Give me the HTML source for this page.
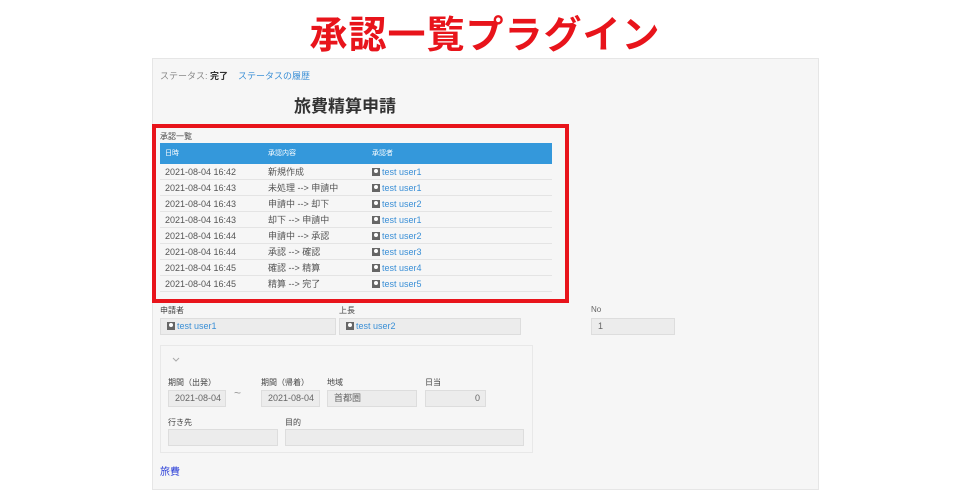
<!DOCTYPE html>
<html><head><meta charset="utf-8"><style>
body{margin:0;width:970px;height:485px;background:#fff;position:relative;overflow:hidden;font-family:"Liberation Sans","Noto Sans CJK JP",sans-serif;}
.a{position:absolute}
.t{font-size:9px;color:#444;white-space:nowrap}
.in{position:absolute;background:#ececec;border:1px solid #ddd;box-sizing:border-box;font-size:9px;color:#666;line-height:14px;padding-left:6px}
.u{color:#3a8fd6}
.ic{display:inline-block;width:8px;height:8px;background:#666;vertical-align:-1px;margin-right:2px;position:relative}
.ic:after{content:"";position:absolute;left:2px;top:1px;width:4px;height:4px;border-radius:50%;background:#fff}
.row{position:absolute;left:160px;width:392px;height:16px;border-bottom:1px solid #e4e4e4;box-sizing:border-box;font-size:9px;color:#555;line-height:16px}
.row span{position:absolute;top:0}
</style></head><body>
<div class="a" style="left:0;top:4px;width:970px;text-align:center;font-size:38px;font-weight:bold;color:#e8141b;letter-spacing:1px">承認一覧プラグイン</div>
<div class="a" style="left:152px;top:58px;width:665px;height:430px;background:#f6f6f6;border:1px solid #e6e6e6"></div>
<div class="a t" style="left:160px;top:69px;color:#888">ステータス: <b style="color:#333">完了</b>&nbsp;&nbsp;&nbsp;&nbsp;<span class="u">ステータスの履歴</span></div>
<div class="a" style="left:294px;top:92px;font-size:17px;font-weight:bold;color:#333">旅費精算申請</div>
<div class="a" style="left:152px;top:124px;width:417px;height:179px;border:4px solid #e8141b;box-sizing:border-box"></div>
<div class="a t" style="left:160px;top:131px;font-size:8px">承認一覧</div>
<div class="a" style="left:160px;top:143px;width:392px;height:21px;background:#3498db;color:#fff;font-size:7px;line-height:21px">
<span class="a" style="left:5px">日時</span><span class="a" style="left:108px">承認内容</span><span class="a" style="left:212px">承認者</span></div>
<div class="row" style="top:164px"><span style="left:5px">2021-08-04 16:42</span><span style="left:108px">新規作成</span><span style="left:212px" class="u"><i class="ic"></i>test user1</span></div>
<div class="row" style="top:180px"><span style="left:5px">2021-08-04 16:43</span><span style="left:108px">未処理 --&gt; 申請中</span><span style="left:212px" class="u"><i class="ic"></i>test user1</span></div>
<div class="row" style="top:196px"><span style="left:5px">2021-08-04 16:43</span><span style="left:108px">申請中 --&gt; 却下</span><span style="left:212px" class="u"><i class="ic"></i>test user2</span></div>
<div class="row" style="top:212px"><span style="left:5px">2021-08-04 16:43</span><span style="left:108px">却下 --&gt; 申請中</span><span style="left:212px" class="u"><i class="ic"></i>test user1</span></div>
<div class="row" style="top:228px"><span style="left:5px">2021-08-04 16:44</span><span style="left:108px">申請中 --&gt; 承認</span><span style="left:212px" class="u"><i class="ic"></i>test user2</span></div>
<div class="row" style="top:244px"><span style="left:5px">2021-08-04 16:44</span><span style="left:108px">承認 --&gt; 確認</span><span style="left:212px" class="u"><i class="ic"></i>test user3</span></div>
<div class="row" style="top:260px"><span style="left:5px">2021-08-04 16:45</span><span style="left:108px">確認 --&gt; 精算</span><span style="left:212px" class="u"><i class="ic"></i>test user4</span></div>
<div class="row" style="top:276px"><span style="left:5px">2021-08-04 16:45</span><span style="left:108px">精算 --&gt; 完了</span><span style="left:212px" class="u"><i class="ic"></i>test user5</span></div>

<div class="a t" style="left:160px;top:305px;font-size:8px">申請者</div>
<div class="in u" style="left:160px;top:318px;width:176px;height:17px"><i class="ic"></i>test user1</div>
<div class="a t" style="left:339px;top:305px;font-size:8px">上長</div>
<div class="in u" style="left:339px;top:318px;width:182px;height:17px"><i class="ic"></i>test user2</div>
<div class="a t" style="left:591px;top:305px;font-size:8px;color:#666">No</div>
<div class="in" style="left:591px;top:318px;width:84px;height:17px">1</div>

<div class="a" style="left:160px;top:345px;width:373px;height:108px;border:1px solid #e8e8e8;box-sizing:border-box"></div>
<svg class="a" style="left:172px;top:357px" width="8" height="6"><path d="M1 1 L4 4 L7 1" stroke="#aaa" fill="none" stroke-width="1"/></svg>
<div class="a t" style="left:168px;top:377px;font-size:8px">期間（出発）</div>
<div class="in" style="left:168px;top:390px;width:58px;height:17px">2021-08-04</div>
<div class="a" style="left:234px;top:386px;font-size:12px;color:#999">~</div>
<div class="a t" style="left:261px;top:377px;font-size:8px">期間（帰着）</div>
<div class="in" style="left:261px;top:390px;width:59px;height:17px">2021-08-04</div>
<div class="a t" style="left:327px;top:377px;font-size:8px">地域</div>
<div class="in" style="left:327px;top:390px;width:90px;height:17px">首都圏</div>
<div class="a t" style="left:425px;top:377px;font-size:8px">日当</div>
<div class="in" style="left:425px;top:390px;width:61px;height:17px;text-align:right;padding-right:5px">0</div>
<div class="a t" style="left:168px;top:417px;font-size:8px">行き先</div>
<div class="in" style="left:168px;top:429px;width:110px;height:17px"></div>
<div class="a t" style="left:285px;top:417px;font-size:8px">目的</div>
<div class="in" style="left:285px;top:429px;width:239px;height:17px"></div>
<div class="a" style="left:160px;top:463px;font-size:10px;color:#2a3ed8">旅費</div>
</body></html>
